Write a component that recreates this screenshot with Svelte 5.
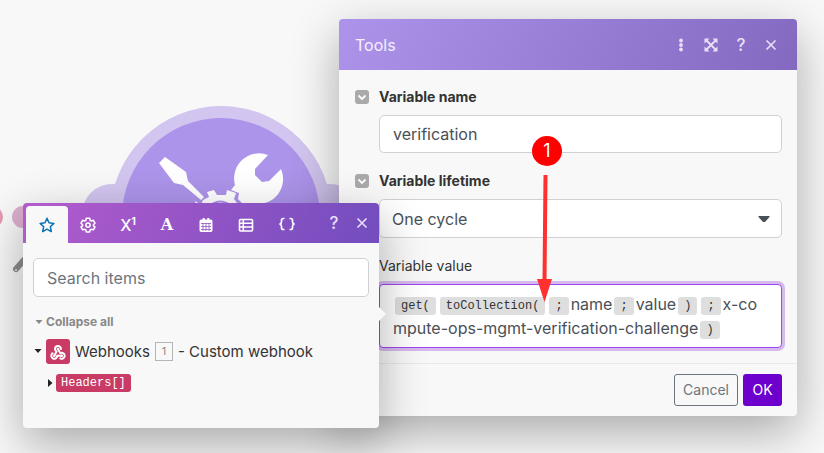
<script>
  let name = $state('verification');
  let lifetime = $state('One cycle');
  let query = $state('');
</script>

<main class="canvas">
  <svg class="scene" width="380" height="453" viewBox="0 0 380 453" aria-hidden="true">
    <circle cx="-8" cy="217" r="11" fill="#e29ab3" />
    <circle cx="23" cy="217" r="11" fill="#dcafcf" />
    <path d="M16 269 L24 260" stroke="#8d8d8d" stroke-width="6" stroke-linecap="round" />
    <circle cx="16" cy="270" r="1" fill="#eee" />
    <circle cx="112" cy="214" r="30" fill="#d2c5ef" />
    <circle cx="330" cy="214" r="30" fill="#d2c5ef" />
    <circle cx="221" cy="217" r="111" fill="#d2c5ef" />
    <circle cx="221" cy="217" r="99" fill="#ac94ea" />
    <g fill="#fff">
      <path d="M159 163 L165 157 L186 172 L188 181 L204 197 L201 200 L183 185 L174 183 Z" />
      <path d="M268 155 A25 25 0 0 0 235 185 L231 190 L239 193 L238 199 L243 204 H258 A25 25 0 0 0 281 169 L269 181 L262 182 L255 175 V169 Z" />
      <path d="M200 207 L203 200 L209 197 L207 192 L214 190 L217 195 L226 195 L227 190 L236 193 L234 199 L240 207 Z" />
      <path d="M195 201 L200 204 L196 206 Z" />
    </g>
    <path d="M211 205 Q220 198 230 205" fill="none" stroke="#ac94ea" stroke-width="2" />
  </svg>

  <section class="panel tools" aria-label="Tools">
    <header class="tools-head">
      <h1>Tools</h1>
      <div class="actions">
        <button aria-label="More"><svg width="16" height="16" viewBox="0 0 16 16"><g fill="currentColor"><circle cx="8" cy="3.500" r="1.900" /><circle cx="8" cy="8" r="1.900" /><circle cx="8" cy="12.500" r="1.900" /></g></svg></button>
        <button aria-label="Expand"><svg width="16" height="16" viewBox="0 0 16 16"><path d="M3 3 L13 13 M13 3 L3 13" stroke="currentColor" stroke-width="1.800" /><path d="M1.500 1.500h5L1.500 6.500z M14.500 1.500v5L9.500 1.500z M1.500 14.500v-5l5 5z M14.500 14.500h-5l5-5z" fill="currentColor" /></svg></button>
        <button class="q" aria-label="Help">?</button>
        <button aria-label="Close"><svg width="16" height="16" viewBox="0 0 16 16"><path d="M3.500 3.500l9 9M12.500 3.500l-9 9" stroke="currentColor" stroke-width="1.600" /></svg></button>
      </div>
    </header>

    <div class="form">
      <div class="field">
        <button class="toggle" aria-label="Variable name options"><svg width="14" height="14" viewBox="0 0 14 14"><path d="M3.500 5.500L7 9l3.500-3.500" fill="none" stroke="#fff" stroke-width="1.800" /></svg></button>
        <label class="strong" for="name">Variable name</label>
        <input id="name" bind:value={name} />
      </div>
      <div class="field">
        <button class="toggle" aria-label="Variable lifetime options"><svg width="14" height="14" viewBox="0 0 14 14"><path d="M3.500 5.500L7 9l3.500-3.500" fill="none" stroke="#fff" stroke-width="1.800" /></svg></button>
        <label class="strong" for="lifetime">Variable lifetime</label>
        <div class="select">
          <select id="lifetime" bind:value={lifetime}><option>One cycle</option><option>One execution</option></select>
          <svg width="12" height="8" viewBox="0 0 12 8" aria-hidden="true"><path d="M.5 1h11v1L7 7H5L.5 2z" fill="#495057" /></svg>
        </div>
      </div>
      <div class="field">
        <span class="label" id="value-label">Variable value</span>
        <div class="editor" contenteditable="true" role="textbox" tabindex="0" aria-labelledby="value-label"><code>get(</code><code>toCollection(</code><code>;</code><span>name</span><code>;</code><span>value</span><code>)</code><code>;</code><span>x-compute-ops-mgmt-verification-challenge</span><code>)</code></div>
      </div>
    </div>

    <footer>
      <button class="cancel">Cancel</button>
      <button class="ok">OK</button>
    </footer>
  </section>

  <section class="panel picker" aria-label="Items">
    <header class="tabs">
      <button class="tab active" aria-label="Favourites"><svg width="18" height="18" viewBox="0 0 18 18"><path d="M9 2.300l2 4.500 4.900.6-3.600 3.300 1 4.900L9 13.200l-4.300 2.400 1-4.900L2.100 7.400 7 6.800z" fill="none" stroke="#0a72b5" stroke-width="1.500" stroke-linejoin="round" /></svg></button>
      <button class="tab" aria-label="General functions"><svg width="16" height="16" viewBox="0 0 16 16"><path d="M6.300 1.200h3.400l.5 2.200 1 .6 2.100-.7L15 6.200l-1.600 1.500v.9l1.600 1.500-1.700 2.800-2.100-.6-1 .5-.5 2.100H6.300l-.5-2.100-1-.5-2.100.6L1 10.100l1.600-1.500v-.9L1 6.200l1.700-2.900 2.100.7 1-.6z" fill="none" stroke="currentColor" stroke-width="1.500" stroke-linejoin="round" /><circle cx="8" cy="8.100" r="2.100" fill="none" stroke="currentColor" stroke-width="1.500" /></svg></button>
      <button class="tab glyph math" aria-label="Math functions"><span>X<sup>1</sup></span></button>
      <button class="tab glyph letter" aria-label="Text functions"><span>A</span></button>
      <button class="tab" aria-label="Date functions"><svg width="16" height="16" viewBox="0 0 16 16"><path d="M3.200 2.500h1.500V1h2v1.500h2.600V1h2v1.500h1.500q1.700 0 1.700 1.700v9.100q0 1.700-1.700 1.700H3.200q-1.700 0-1.700-1.700V4.200q0-1.700 1.700-1.700z" fill="currentColor" /><path d="M3 6.500h10M3 9.500h10M3 12.500h10M5 6v8M8 6v8M11 6v8" stroke="#9655c6" stroke-width=".8" /></svg></button>
      <button class="tab" aria-label="Array functions"><svg width="16" height="16" viewBox="0 0 16 16"><rect x="1.500" y="2.500" width="13" height="11.500" rx="1" fill="none" stroke="currentColor" stroke-width="1.600" /><path d="M1.500 6.300h13M1.500 10h13M5.300 2.500V14" stroke="currentColor" stroke-width="1.600" /></svg></button>
      <button class="tab" aria-label="Variables"><svg width="18" height="16" viewBox="0 0 18 16"><path d="M6.500 1.500H5.200Q3.500 1.500 3.500 3.200v1.800Q3.500 6.700 1.500 7q2 .5 2 2.200v1.600Q3.500 12.500 5.200 12.500h1.300M11.500 1.500h1.300q1.700 0 1.700 1.700v1.800q0 1.700 2 2-2 .5-2 2.200v1.600q0 1.700-1.700 1.700h-1.300" fill="none" stroke="currentColor" stroke-width="1.700" /></svg></button>
      <div class="window">
        <button class="q" aria-label="Help">?</button>
        <button aria-label="Close"><svg width="16" height="16" viewBox="0 0 16 16"><path d="M3.500 3.500l9 9M12.500 3.500l-9 9" stroke="currentColor" stroke-width="1.600" /></svg></button>
      </div>
    </header>
    <div class="content">
      <input aria-label="Search items" placeholder="Search items" bind:value={query} />
      <button class="collapse"><svg width="8" height="5" viewBox="0 0 8 5"><path d="M.5 0h7L4 4z" fill="currentColor" /></svg>Collapse all</button>
      <div class="module">
        <svg width="8" height="5" viewBox="0 0 8 5" aria-hidden="true"><path d="M.5 0h7L4 4z" fill="#222" /></svg>
        <span class="hook"><svg width="18" height="18" viewBox="0 0 24 24"><g fill="none" stroke="#fff" stroke-width="2.600" stroke-linecap="round"><path d="M4.900 13.600a4 4 0 1 0 6.100 3.400h6" /><path d="M15 20.500a4 4 0 1 0 2-7.500c-.7 0-1.400.2-2 .5l-3-5.500" /><path d="M16 8a4 4 0 1 0-8 0c0 1.500.8 2.800 2 3.500L7 17" /></g><g fill="#fff"><circle cx="12" cy="8" r="1.800" /><circle cx="7" cy="17" r="1.800" /><circle cx="17" cy="17" r="1.800" /></g></svg></span>
        <span>Webhooks</span><span class="num">1</span><span>- Custom webhook</span>
      </div>
      <div class="item">
        <svg width="5" height="8" viewBox="0 0 5 8" aria-hidden="true"><path d="M0 0v8l4.500-4z" fill="#222" /></svg>
        <button class="pill">Headers[]</button>
      </div>
    </div>
  </section>

  <div class="note">
    <span>1</span>
    <svg width="30" height="130" viewBox="0 0 30 130" aria-hidden="true"><path d="M13.500 1 L12.500 108" stroke="#ff3030" stroke-width="4" /><path d="M5 105h15l-7.500 23z" fill="#ff3030" /></svg>
  </div>
</main>

<style>
  :global(body) { margin: 0; }
  .canvas {
    position: relative;
    min-height: 100vh;
    overflow: hidden;
    background: #f8f8f8;
    color: #333;
    font: 14px/20px Inter, "Liberation Sans", sans-serif;
  }
  .canvas :is(button, input, select) { box-sizing: border-box; margin: 0; font: inherit; color: inherit; }
  button { padding: 0; border: 0; background: none; cursor: pointer; }
  svg { display: block; flex: none; }
  .scene { position: absolute; left: 0; top: 0; }
  .panel {
    position: absolute;
    border-radius: 4px;
    background: #f8f8f8;
    box-shadow: 0 16px 48px rgba(0, 0, 0, .32);
  }
  .tools { left: 339px; right: 27px; top: 19px; }
  .tools-head {
    display: flex;
    align-items: center;
    justify-content: space-between;
    height: 51px;
    padding: 0 18px 0 16px;
    border-radius: 4px 4px 0 0;
    background: linear-gradient(115deg, #ad94ea, #8369bf);
    color: #f4f0fc;
  }
  h1 { margin: 0; font-size: 16px; font-weight: 400; }
  .actions, .window { display: flex; align-items: center; gap: 14px; color: #e8e0f8; }
  .actions button, .window button { width: 16px; height: 20px; display: grid; place-items: center; }
  .canvas .q { font-size: 17px; font-weight: 500; }
  .form { padding: 17px 15px 15px 16px; display: grid; gap: 18px; }
  .field { display: grid; grid-template-columns: 14px 1fr; column-gap: 10px; row-gap: 8px; align-items: center; }
  .field > :is(input, .select, .label, .editor) { grid-column: 2; }
  .canvas .toggle { width: 14px; height: 14px; border-radius: 3px; background: #aaa; }
  .strong { font-weight: 700; }
  input, select {
    width: 100%;
    height: 38px;
    padding: 0 13px;
    border: 1px solid #ced0d2;
    border-radius: 5px;
    background: #fff;
    outline: 0;
  }
  .canvas :is(input, select) { font-size: 16px; color: #495057; }
  .select { display: flex; align-items: center; position: relative; }
  select { appearance: none; height: 39px; }
  .canvas select { padding: 0 12px; }
  .select svg { position: absolute; right: 12px; pointer-events: none; }
  .editor {
    padding: 7px 13px;
    border: 1px solid #a145ef;
    border-radius: 4px;
    background: #fff;
    box-shadow: 0 0 0 3px #d6b9ee;
    color: #495057;
    font-size: 16px;
    line-height: 24px;
    word-break: break-all;
    outline: 0;
  }
  code {
    display: inline-block;
    height: 18px;
    margin: 0 2px;
    padding: 0 6px;
    border-radius: 3px;
    background: #dedede;
    color: #333;
    font: 12px/18px "Liberation Mono", monospace;
    vertical-align: 1px;
  }
  footer { display: flex; justify-content: flex-end; gap: 5px; padding: 10px 15px; border-top: 1px solid #e9e9e9; }
  footer button { height: 32px; border-radius: 3px; }
  .canvas .cancel { border: 1px solid #6c757d; padding: 0 8px; color: #6c757d; }
  .canvas .ok { min-width: 39px; background: #6d00cc; color: #fff; }

  .picker { left: 23px; width: 356px; top: 203px; height: 225px; }
  .picker::after {
    content: "";
    position: absolute;
    left: 100%;
    top: 104px;
    border: 7px solid transparent;
    border-left-color: #f8f8f8;
    border-right: 0;
  }
  .tabs {
    display: flex;
    height: 40px;
    padding: 0 9px 0 3px;
    border-radius: 4px 4px 0 0;
    background: linear-gradient(115deg, #b35bcd, #724dbe);
    color: #fff;
  }
  .canvas .tab { display: grid; place-items: center; padding: 4px 12px 0; color: #fff; }
  .canvas .active { margin-top: 3px; padding-top: 1px; border-radius: 4px 4px 0 0; background: #f8f8f8; }
  .canvas .glyph { width: 40px; padding: 4px 0 0; font: 16px/20px "DejaVu Serif", serif; }
  .canvas .math { font-family: Inter, sans-serif; font-weight: 500; }
  .canvas .letter { width: 38px; font-weight: 700; }
  sup { font-size: 10px; line-height: 0; font-weight: 700; vertical-align: 6px; }
  .window { margin-left: auto; gap: 12px; }
  .content { padding: 15px 10px; display: grid; justify-items: start; }
  .content input { height: 39px; }
  .content input::placeholder { color: #6c757d; opacity: 1; }
  .canvas .collapse { display: flex; align-items: center; gap: 3px; margin-top: 15px; padding-left: 2px; color: #888; font-size: 12px; font-weight: 700; }
  .module { display: flex; align-items: center; gap: 5px; margin-top: 7px; padding-left: 1px; font-size: 15px; line-height: 24px; }
  .hook { display: grid; place-items: center; width: 24px; height: 25px; margin-left: -1px; border-radius: 3px; background: #c93b65; }
  .num { width: 16px; border: 1px solid #b5b5b5; color: #888; font-size: 11px; line-height: 17px; text-align: center; }
  .item { display: flex; align-items: center; gap: 3px; margin-top: 10px; padding-left: 15px; }
  .canvas .pill { height: 18px; padding: 0 5px; border-radius: 3px; background: #c93b65; color: #fff; font: 12px/18px "Liberation Mono", monospace; }

  .note { position: absolute; left: 532px; top: 136px; width: 30px; pointer-events: none; }
  .note span { display: block; height: 30px; margin-bottom: 8px; border-radius: 50%; background: #f00; color: #fff; font-size: 18px; line-height: 30px; text-align: center; }
</style>
